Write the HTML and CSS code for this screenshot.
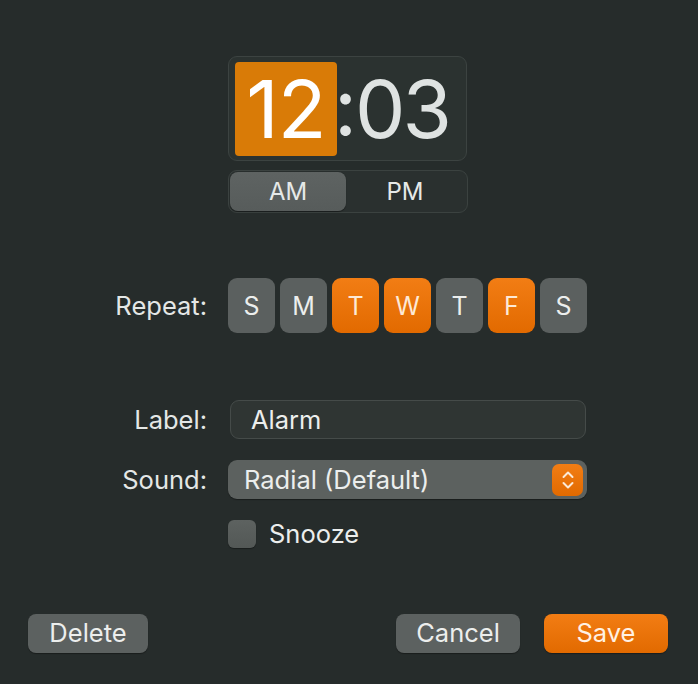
FILE: index.html
```html
<!DOCTYPE html>
<html>
<head>
<meta charset="utf-8">
<link rel="stylesheet" href="styles.css">
</head>
<body>
<div class="sheet">
  <div class="row row-time">
    <div class="lbl"></div>
    <div class="ctl">
      <div class="clock">
        <div class="hour">12</div>
        <div class="colon">:</div>
        <div class="minute">03</div>
      </div>
    </div>
  </div>
  <div class="row row-ampm">
    <div class="lbl"></div>
    <div class="ctl">
      <div class="segmented">
        <div class="seg seg-on">AM</div>
        <div class="seg">PM</div>
      </div>
    </div>
  </div>
  <div class="row row-repeat">
    <div class="lbl">Repeat:</div>
    <div class="ctl">
      <div class="days">
        <div class="day">S</div>
        <div class="day">M</div>
        <div class="day day-on">T</div>
        <div class="day day-on">W</div>
        <div class="day">T</div>
        <div class="day day-on">F</div>
        <div class="day">S</div>
      </div>
    </div>
  </div>
  <div class="row row-label">
    <div class="lbl">Label:</div>
    <div class="ctl">
      <div class="field">Alarm</div>
    </div>
  </div>
  <div class="row row-sound">
    <div class="lbl">Sound:</div>
    <div class="ctl">
      <div class="popup">
        <span class="popup-text">Radial (Default)</span>
        <span class="stepper">
          <svg width="14" height="22" viewBox="0 0 14 22"><path d="M2.5 8 L7 3.5 L11.5 8 M2.5 14 L7 18.5 L11.5 14" fill="none" stroke="#fbe9d6" stroke-width="2" stroke-linecap="round" stroke-linejoin="round"/></svg>
        </span>
      </div>
    </div>
  </div>
  <div class="row row-snooze">
    <div class="lbl"></div>
    <div class="ctl">
      <div class="check-line">
        <span class="checkbox"></span>
        <span class="check-text">Snooze</span>
      </div>
    </div>
  </div>
  <div class="footer">
    <div class="btn">Delete</div>
    <div class="footer-right">
      <div class="btn btn-cancel">Cancel</div>
      <div class="btn btn-save">Save</div>
    </div>
  </div>
</div>
</body>
</html>
```
FILE: styles.css
```css
html, body {
  margin: 0;
  padding: 0;
  background: #262c2b;
}
body {
  width: 698px;
  height: 684px;
  overflow: hidden;
  font-family: Inter, "Noto Sans", sans-serif;
  color: #e9ecea;
}
.sheet {
  display: flex;
  flex-direction: column;
  padding-top: 56px;
}
.row {
  display: flex;
  align-items: center;
}
.lbl {
  width: 207px;
  flex: none;
  text-align: right;
  font-size: 25.5px;
  color: #e4e7e6;
  margin-right: 21px;
}
.row-time .lbl,
.row-ampm .lbl,
.row-snooze .lbl {
  line-height: 0;
}
.ctl {
  flex: none;
}
.clock {
  width: 231px;
  height: 103px;
  padding: 0 0 0 6px;
  border: 1px solid #3c4341;
  background: #2b3230;
  border-radius: 9px;
  display: flex;
  align-items: center;
  font-size: 80px;
  line-height: 1;
}
.hour {
  width: 102px;
  height: 94px;
  background: #d97b07;
  border-radius: 4px;
  color: #ffffff;
  display: flex;
  align-items: center;
  justify-content: center;
  margin-top: 1px;
  letter-spacing: -1px;
}
.colon {
  color: #dfe3e2;
  margin-left: -3px;
  margin-top: -6px;
}
.minute {
  color: #dfe3e2;
  margin-left: -2px;
  letter-spacing: -3px;
}
.row-ampm {
  margin-top: 9px;
}
.segmented {
  width: 236px;
  height: 41px;
  border: 1px solid #3b4240;
  background: #2a302f;
  border-radius: 9px;
  display: flex;
  align-items: center;
  padding: 0 1px;
}
.seg {
  width: 118px;
  height: 39px;
  display: flex;
  align-items: center;
  justify-content: center;
  font-size: 24px;
  color: #e6e9e8;
  border-radius: 8px;
}
.seg-on {
  width: 116px;
  background: linear-gradient(#5e6362, #575c5b);
  box-shadow: 0 0.5px 1px rgba(0,0,0,0.4);
}
.row-repeat {
  margin-top: 65px;
}
.days {
  display: flex;
  gap: 5px;
}
.day {
  width: 47px;
  height: 55px;
  border-radius: 9px;
  background: #5b605f;
  display: flex;
  align-items: center;
  justify-content: center;
  font-size: 25px;
  color: #eceeed;
}
.day-on {
  background: linear-gradient(#f27d14, #e26a00);
  color: #fde9d6;
}
.row-label {
  margin-top: 67px;
}
.field {
  width: 334px;
  height: 37px;
  margin-left: 2px;
  border: 1px solid #454b49;
  background: #2f3533;
  border-radius: 9px;
  display: flex;
  align-items: center;
  padding-left: 20px;
  font-size: 25.5px;
  color: #eceeed;
}
.row-sound {
  margin-top: 21px;
}
.popup {
  width: 359px;
  height: 39px;
  border-radius: 9px;
  background: #5c615f;
  box-shadow: 0 1px 1px rgba(0,0,0,0.35);
  display: flex;
  align-items: center;
  justify-content: space-between;
  box-sizing: border-box;
  padding: 0 4px 0 16px;
}
.popup-text {
  font-size: 25.5px;
  color: #eceeed;
}
.stepper {
  width: 31px;
  height: 32px;
  border-radius: 7px;
  background: linear-gradient(#f27d14, #e26a00);
  display: flex;
  align-items: center;
  justify-content: center;
}
.row-snooze {
  margin-top: 21px;
}
.check-line {
  display: flex;
  align-items: center;
  gap: 13px;
  height: 28px;
}
.checkbox {
  width: 28px;
  height: 28px;
  border-radius: 6px;
  background: linear-gradient(#5d6260, #535856);
  box-shadow: 0 1px 1px rgba(0,0,0,0.35);
}
.check-text {
  font-size: 25.5px;
  line-height: 28px;
  color: #eceeed;
}
.footer {
  margin-top: 66px;
  display: flex;
  justify-content: space-between;
  padding: 0 30px 0 28px;
}
.footer-right {
  display: flex;
  gap: 24px;
}
.btn {
  width: 120px;
  height: 39px;
  border-radius: 8px;
  background: #5c6160;
  box-shadow: 0 1px 1px rgba(0,0,0,0.35);
  display: flex;
  align-items: center;
  justify-content: center;
  font-size: 25.5px;
  line-height: 30px;
  color: #eceeed;
  padding-bottom: 1px;
  box-sizing: border-box;
}
.btn-cancel {
  width: 124px;
}
.btn-save {
  width: 124px;
  background: linear-gradient(#f27d14, #e26a00);
  color: #fff1e4;
}
```
